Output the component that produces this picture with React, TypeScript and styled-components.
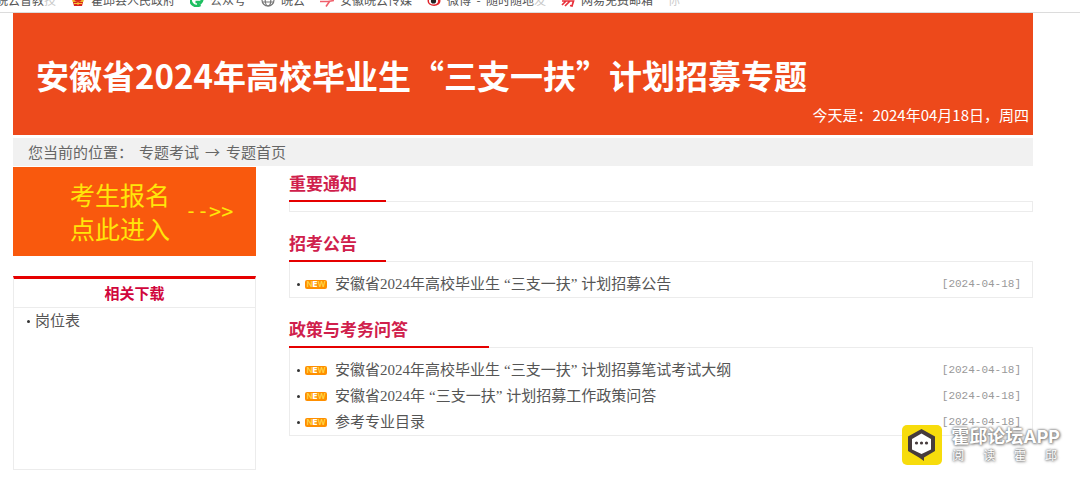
import React from 'react';
import styled, { createGlobalStyle } from 'styled-components';

const sans = `"Noto Sans CJK SC", sans-serif`;
const mixed = `"Liberation Serif", "Noto Sans CJK SC", serif`;

const GlobalStyle = createGlobalStyle`
  * { box-sizing: border-box; }
  body { margin: 0; background: #fff; font-family: ${sans}; font-size: 15px; color: #555; }
  h1, h2, h3, p, ul, ol { margin: 0; padding: 0; }
  ul, ol { list-style: none; }
  a { color: inherit; text-decoration: none; }
`;

const Page = styled.div`
  position: relative;
  overflow-x: hidden;
`;

const BookmarkBar = styled.nav`
  height: 13px;
  overflow: hidden;
  border-bottom: 1px solid #dcdcdc;
`;

const BookmarkList = styled.ul`
  display: flex;
  align-items: center;
  gap: 15px;
  height: 24px;
  margin: -12px 0 0 -4px;
  white-space: nowrap;
`;

const Bookmark = styled.a<{ $faded?: boolean }>`
  display: flex;
  align-items: center;
  gap: 6px;
  font-size: 12px;
  line-height: 24px;
  color: ${(p) => (p.$faded ? '#ccc' : '#555')};

  svg { width: 14px; height: 14px; flex: none; }
`;

const FadeOut = styled.span`
  color: #c8c8c8;
`;

const Content = styled.main`
  margin: 0 47px 0 13px;
`;

const Banner = styled.header`
  padding: 38px 4px 8px 23px;
  background: #ed491b;
  color: #fff;
`;

const BannerTitle = styled.h1`
  font-size: 33px;
  line-height: 48px;
  font-weight: 700;
  white-space: nowrap;
`;

const Today = styled.p`
  margin-top: 4px;
  font-size: 15px;
  line-height: 24px;
  text-align: right;
`;

const Breadcrumb = styled.nav`
  display: flex;
  align-items: center;
  gap: 6px;
  height: 28px;
  margin-top: 3px;
  padding: 0 15px 2px;
  background: #f1f1f1;
  font-size: 15px;
  color: #666;
`;

const Columns = styled.div`
  display: grid;
  grid-template-columns: 243px minmax(0, 1fr);
  gap: 33px;
  padding-top: 1px;
`;

const Sidebar = styled.aside`
  display: flex;
  flex-direction: column;
  gap: 20px;
`;

const ApplyLink = styled.a`
  display: flex;
  align-items: center;
  gap: 15px;
  height: 89px;
  padding: 0 0 2px 57px;
  background: #f9590d;
  color: #ffe60a;
  font-size: 25px;
  line-height: 34px;
`;

const Arrows = styled.span`
  font-family: "DejaVu Sans Mono", monospace;
  font-size: 20px;
`;

const Downloads = styled.section`
  min-height: 194px;
  border: 1px solid #ececec;
  border-top: 3px solid #e60000;
`;

const DownloadsTitle = styled.h2`
  height: 29px;
  border-bottom: 1px solid #ececec;
  font-size: 15px;
  line-height: 27px;
  text-align: center;
  color: #d0063c;
`;

const DownloadList = styled.ul`
  padding: 0 13px;
`;

const Sections = styled.div`
  display: flex;
  flex-direction: column;
  gap: 15px;
`;

const SectionTitle = styled.h2<{ $wide?: boolean }>`
  position: relative;
  width: ${(p) => (p.$wide ? '200px' : '97px')};
  height: 35px;
  margin-bottom: -1px;
  border-bottom: 2px solid #e60000;
  font-size: 17px;
  line-height: 31px;
  font-weight: 700;
  color: #d0204c;
`;

const SectionList = styled.ul`
  padding: 9px 11px 0 7px;
  border: 1px solid #ececec;
`;

const Item = styled.li`
  display: flex;
  align-items: center;
  height: 26px;
  font-family: ${mixed};

  &::before {
    content: "";
    width: 3px;
    height: 3px;
    margin-right: 5px;
    border-radius: 50%;
    background: #333;
  }

  a { padding-bottom: 3px; }
`;

const NewTag = styled.span`
  width: 22px;
  height: 9px;
  margin-right: 8px;
  border-radius: 2px;
  background: #ff8f00;
  color: #ffd84a;
  font-family: Inter, sans-serif;
  font-size: 8px;
  line-height: 9px;
  font-weight: 600;
  text-align: center;

  b { color: #fff; }
`;

const Quoted = styled.span`
  margin: 0 4px;
`;

const DateText = styled.time`
  margin-left: auto;
  font-family: "Liberation Mono", monospace;
  font-size: 11px;
  color: #999;
`;

const AppBadge = styled.div`
  position: absolute;
  top: 425px;
  right: 20px;
  display: flex;
  gap: 9px;
  color: #fff;
  text-shadow: 0 0 2px #777, 0 0 3px #888, 1px 1px 3px #999;

  svg { width: 40px; height: 40px; }
`;

const AppName = styled.p`
  font-family: Inter, ${sans};
  font-size: 18px;
  line-height: 23px;
  font-weight: 700;
`;

const AppSlogan = styled.p`
  display: flex;
  justify-content: space-between;
  padding: 0 3px 0 1px;
  font-size: 12px;
  line-height: 14px;
`;

const EmblemIcon = () => (
  <svg viewBox="0 0 14 14" aria-hidden="true">
    <circle cx="7" cy="6" r="6" fill="#f0b429" />
    <circle cx="7" cy="5" r="4" fill="#d8231c" />
    <path d="M2 9h10l-1 4H3z" fill="#d8231c" />
    <path d="M3 10.5h8M7 9v3" stroke="#f7c531" />
  </svg>
);

const WechatIcon = () => (
  <svg viewBox="0 0 14 14" aria-hidden="true">
    <path d="M9 1.500A6 6 0 1 0 9 12.500c-1-1-1-2 0-3.500H5.500" fill="none" stroke="#1dbf60" strokeWidth="2.600" />
    <path d="M14 4c0 4-2 7.500-5.500 9C10 10.500 10.500 8 10.500 5z" fill="#1dbf60" />
  </svg>
);

const GlobeIcon = () => (
  <svg viewBox="0 0 14 14" fill="none" stroke="#777" strokeWidth="1.2" aria-hidden="true">
    <circle cx="7" cy="7" r="6" />
    <ellipse cx="7" cy="7" rx="2.8" ry="6" />
    <path d="M1.5 5h11M1.5 9h11" />
  </svg>
);

const BoltIcon = () => (
  <svg viewBox="0 0 14 14" aria-hidden="true">
    <path d="M0 8.5h9.5L6 13.5M8 8.500L14 7.500" fill="none" stroke="#f0606c" strokeWidth="1.600" />
  </svg>
);

const WeiboIcon = () => (
  <svg viewBox="0 0 14 14" aria-hidden="true">
    <ellipse cx="7" cy="8" rx="6.500" ry="5" fill="#e0242b" />
    <ellipse cx="6.500" cy="8" rx="4.500" ry="3.400" fill="#fff" />
    <circle cx="6.500" cy="8" r="2.600" fill="#222" />
  </svg>
);

const MailIcon = () => (
  <svg viewBox="0 0 14 14" fill="none" stroke="#e8303a" strokeWidth="1.700" aria-hidden="true">
    <path d="M3 1h8v4H3zM1 8h11.500l-1.500 5-2-.5M5 8l-4 4M9 8l-5 5" />
  </svg>
);

const ChatLogo = () => (
  <svg viewBox="0 0 40 40" aria-hidden="true">
    <rect width="40" height="40" rx="5" fill="#f7dc0c" />
    <path d="M19.500 4l13.500 7.500v14.500L22 32.500V36l-5-3.500L6 26V11.500z" fill="#463b3c" />
    <path d="M19.500 8.500l9.500 5.500v10.500l-9.500 4.500-9.500-4.500V14z" fill="#fff" />
    <circle cx="14.500" cy="18" r="1.600" fill="#463b3c" />
    <circle cx="19.500" cy="18" r="1.600" fill="#463b3c" />
    <circle cx="24.500" cy="18" r="1.600" fill="#463b3c" />
  </svg>
);

interface Notice {
  before: string;
  quoted?: string;
  after?: string;
}

const NoticeItem = ({ before, quoted, after }: Notice) => (
  <Item>
    <NewTag>N<b>E</b>W</NewTag>
    <a href="#notice">
      {before}
      {quoted && <Quoted>{quoted}</Quoted>}
      {after}
    </a>
    <DateText dateTime="2024-04-18">[2024-04-18]</DateText>
  </Item>
);

const sections: { title: string; wide?: boolean; notices: Notice[] }[] = [
  { title: '重要通知', notices: [] },
  {
    title: '招考公告',
    notices: [{ before: '安徽省2024年高校毕业生', quoted: '“三支一扶”', after: '计划招募公告' }],
  },
  {
    title: '政策与考务问答',
    wide: true,
    notices: [
      { before: '安徽省2024年高校毕业生', quoted: '“三支一扶”', after: '计划招募笔试考试大纲' },
      { before: '安徽省2024年', quoted: '“三支一扶”', after: '计划招募工作政策问答' },
      { before: '参考专业目录' },
    ],
  },
];

export default function App() {
  return (
    <Page lang="zh-CN">
      <GlobalStyle />
      <BookmarkBar>
        <BookmarkList>
          <li><Bookmark href="#b1"><span>皖云督教<FadeOut>技</FadeOut></span></Bookmark></li>
          <li><Bookmark href="#b2"><EmblemIcon />霍邱县人民政府</Bookmark></li>
          <li><Bookmark href="#b3"><WechatIcon />公众号</Bookmark></li>
          <li><Bookmark href="#b4"><GlobeIcon />皖云</Bookmark></li>
          <li><Bookmark href="#b5"><BoltIcon />安徽皖云传媒</Bookmark></li>
          <li><Bookmark href="#b6"><WeiboIcon /><span>微博{'\u00a0 -\u00a0 '}随时随地<FadeOut>发</FadeOut></span></Bookmark></li>
          <li><Bookmark href="#b7"><MailIcon />网易免费邮箱</Bookmark></li>
          <li><Bookmark href="#b8" $faded>你</Bookmark></li>
        </BookmarkList>
      </BookmarkBar>
      <Content>
        <Banner>
          <BannerTitle>安徽省2024年高校毕业生“三支一扶”计划招募专题</BannerTitle>
          <Today>今天是：2024年04月18日，周四</Today>
        </Banner>
        <Breadcrumb>
          <span>您当前的位置：</span>
          <a href="#topics">专题考试</a>
          <span>→</span>
          <a href="#home">专题首页</a>
        </Breadcrumb>
        <Columns>
          <Sidebar>
            <ApplyLink href="#apply">
              <span>考生报名<br />点此进入</span>
              <Arrows>--&gt;&gt;</Arrows>
            </ApplyLink>
            <Downloads>
              <DownloadsTitle>相关下载</DownloadsTitle>
              <DownloadList>
                <Item><a href="#posts">岗位表</a></Item>
              </DownloadList>
            </Downloads>
          </Sidebar>
          <Sections>
            {sections.map((s) => (
              <section key={s.title}>
                <SectionTitle $wide={s.wide}>{s.title}</SectionTitle>
                <SectionList>
                  {s.notices.map((n, i) => <NoticeItem key={i} {...n} />)}
                </SectionList>
              </section>
            ))}
          </Sections>
        </Columns>
      </Content>
      <AppBadge>
        <ChatLogo />
        <div>
          <AppName>霍邱论坛APP</AppName>
          <AppSlogan><span>阅</span><span>读</span><span>霍</span><span>邱</span></AppSlogan>
        </div>
      </AppBadge>
    </Page>
  );
}
